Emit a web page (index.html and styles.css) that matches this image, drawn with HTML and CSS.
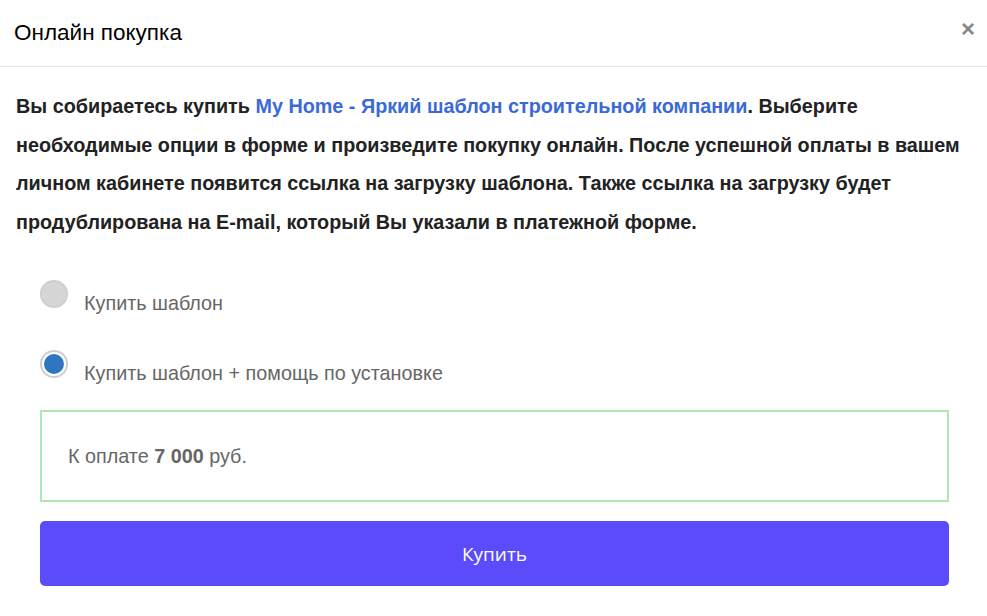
FILE: index.html
```html
<!DOCTYPE html>
<html lang="ru">
<head>
    <meta charset="UTF-8">
    <meta name="viewport" content="width=device-width, initial-scale=1.0">
    <title>Онлайн покупка</title>
    <link rel="stylesheet" href="styles.css">
</head>
<body>
    <div class="modal">
        <div class="modal-header">
            <h4 class="modal-title">Онлайн покупка</h4>
            <button class="close" type="button">&times;</button>
        </div>

        <div class="modal-body">
            <p class="intro">
                Вы собираетесь купить <a href="#">My Home - Яркий шаблон строительной компании</a>. Выберите
                необходимые опции в форме и произведите покупку онлайн. После успешной оплаты в вашем
                личном кабинете появится ссылка на загрузку шаблона. Также ссылка на загрузку будет
                продублирована на E-mail, который Вы указали в платежной форме.
            </p>

            <form class="buy-form">
                <label class="option">
                    <input type="radio" name="plan" value="1">
                    <span class="radio"></span>
                    <span class="option-text">Купить шаблон</span>
                </label>
                <label class="option">
                    <input type="radio" name="plan" value="2" checked>
                    <span class="radio"></span>
                    <span class="option-text">Купить шаблон + помощь по установке</span>
                </label>

                <div class="total">К оплате <b>7 000</b> руб.</div>

                <button class="buy-btn" type="button">Купить</button>
            </form>
        </div>
    </div>
</body>
</html>
```

FILE: styles.css
```css
body {
    margin: 0;
    font-family: "Liberation Sans", Arial, sans-serif;
    background-color: #fff;
}
.modal {
    width: 987px;
}
.modal-header {
    display: flex;
    align-items: center;
    justify-content: space-between;
    height: 66px;
    padding: 0 12px 0 14px;
    border-bottom: 1px solid #e5e5e5;
}
.modal-title {
    margin: 0;
    font-size: 22.5px;
    font-weight: normal;
    color: #000;
}
.close {
    border: none;
    background: none;
    padding: 0;
    margin-top: -8px;
    font-size: 24px;
    font-weight: bold;
    line-height: 1;
    color: #888;
    cursor: pointer;
    font-family: "Liberation Sans", Arial, sans-serif;
}
.modal-body {
    padding: 20px 16px 0 16px;
}
.intro {
    margin: 0;
    font-size: 19.8px;
    font-weight: bold;
    line-height: 38.5px;
    color: #222;
}
.intro a {
    color: #3a6ad6;
    text-decoration: none;
}
.buy-form {
    padding: 39px 22px 0 24px;
}
.option {
    display: flex;
    align-items: flex-start;
    height: 70px;
    cursor: pointer;
}
.option input {
    display: none;
}
.radio {
    width: 24px;
    height: 24px;
    border: 2px solid #cfcfcf;
    border-radius: 50%;
    background-color: #d6d6d6;
    box-sizing: content-box;
    margin-right: 16px;
    flex-shrink: 0;
}
.option input:checked + .radio {
    width: 20px;
    height: 20px;
    background-color: #2e77c0;
    border: 2px solid #fff;
    box-shadow: 0 0 0 2px #cfcfcf;
    margin: 2px 18px 0 2px;
}
.option-text {
    margin-top: 12px;
    font-size: 19.8px;
    color: #666;
}
.total {
    margin-top: -10px;
    border: 2px solid #aee8b4;
    padding: 0 26px;
    height: 88px;
    line-height: 88px;
    font-size: 19.8px;
    color: #666;
}
.buy-btn {
    display: block;
    width: 100%;
    height: 65px;
    margin-top: 19px;
    border: none;
    border-radius: 5px;
    background-color: #5b4bfb;
    color: #fff;
    font-family: "Open Sans", sans-serif;
    font-size: 19px;
    cursor: pointer;
}
```
